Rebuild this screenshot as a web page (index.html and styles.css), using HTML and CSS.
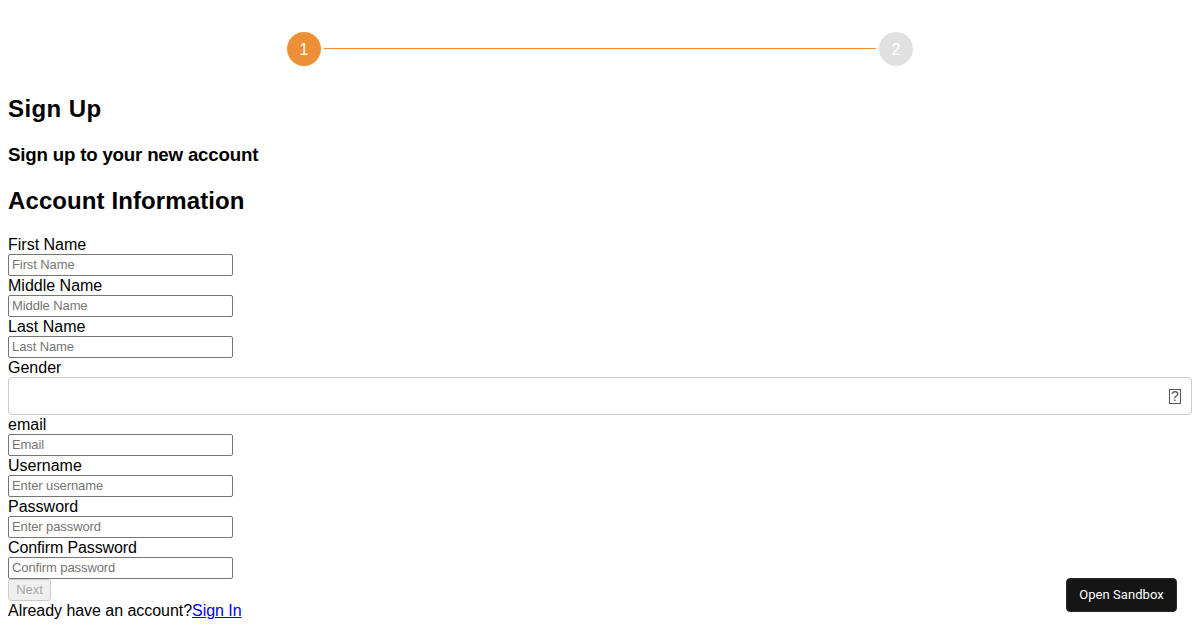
FILE: index.html
```html
<!DOCTYPE html>
<html lang="en">
  <head>
    <meta charset="UTF-8" />
    <title>Sign Up</title>
    <link rel="stylesheet" href="styles.css">
  </head>
  <body>
    <!-- Stepper -->
    <div class="stepper">
      <div class="step active">1</div>
      <div class="step-line"></div>
      <div class="step">2</div>
    </div>

    <h2 class="page-title">Sign Up</h2>
    <h3>Sign up to your new account</h3>
    <h2 class="section-title">Account Information</h2>

    <form class="signup-form">
      <div class="field">
        <label for="first">First Name</label>
        <input id="first" type="text" placeholder="First Name" />
      </div>
      <div class="field">
        <label for="middle">Middle Name</label>
        <input id="middle" type="text" placeholder="Middle Name" />
      </div>
      <div class="field">
        <label for="last">Last Name</label>
        <input id="last" type="text" placeholder="Last Name" />
      </div>
      <div class="field">
        <label>Gender</label>
        <div class="select-box"><span class="missing-icon">?</span></div>
      </div>
      <div class="field">
        <label for="email">email</label>
        <input id="email" type="text" placeholder="Email" />
      </div>
      <div class="field">
        <label for="username">Username</label>
        <input id="username" type="text" placeholder="Enter username" />
      </div>
      <div class="field">
        <label for="password">Password</label>
        <input id="password" type="password" placeholder="Enter password" />
      </div>
      <div class="field">
        <label class="tight-label" for="confirm">Confirm Password</label>
        <input id="confirm" type="password" placeholder="Confirm password" />
      </div>
      <button class="next-btn" type="button" disabled>Next</button>
    </form>

    <div class="signin-row">Already have an account?<a href="#">Sign In</a></div>

    <button class="sandbox-btn" type="button">Open Sandbox</button>
  </body>
</html>
```

FILE: styles.css
```css
body {
  margin: 8px;
  font-family: Helvetica, Arial, sans-serif;
  font-size: 16px;
  color: #000;
  background-color: #fff;
}

/* Stepper */
.stepper {
  display: flex;
  align-items: center;
  gap: 3px;
  width: 626px;
  margin: 24px auto 0;
}

.step {
  box-sizing: border-box;
  width: 34px;
  height: 34px;
  padding-top: 1px;
  flex-shrink: 0;
  display: flex;
  align-items: center;
  justify-content: center;
  border-radius: 50%;
  background-color: #e0e0e0;
  color: #fff;
}

.step.active {
  background-color: #ed8f36;
}

.step-line {
  flex: 1;
  height: 1px;
  margin-top: -1px;
  background-color: #ed8f36;
}

/* Headings */
h2 {
  font-size: 24px;
  line-height: 28px;
}

h3 {
  font-size: 18.72px;
  line-height: 22px;
  letter-spacing: -0.2px;
  margin: 21px 0 0;
}

.page-title {
  margin: 29px 0 0;
  letter-spacing: 0.4px;
}

.section-title {
  margin: 21px 0 0;
  letter-spacing: 0.1px;
}

/* Form */
.signup-form {
  margin-top: 21px;
}

.field label {
  display: block;
  height: 18px;
  line-height: 18px;
}

.field .tight-label {
  letter-spacing: -0.12px;
}

.field {
  margin-bottom: 1px;
}

.field input {
  display: block;
  box-sizing: border-box;
  width: 225px;
  height: 22px;
  padding: 0 3px 2px;
  border: 1px solid #767676;
  border-radius: 2px;
  font-size: 13px;
  letter-spacing: -0.1px;
}

.select-box {
  box-sizing: border-box;
  display: flex;
  align-items: center;
  justify-content: flex-end;
  height: 38px;
  padding-right: 10px;
  border: 1px solid #ccc;
  border-radius: 4px;
  background-color: #fff;
}

.missing-icon {
  box-sizing: border-box;
  width: 12px;
  height: 15px;
  border: 1px solid #555;
  font-size: 14px;
  line-height: 13px;
  text-align: center;
  color: #555;
}

.field:last-of-type {
  margin-bottom: 0;
}

.next-btn {
  display: block;
  box-sizing: border-box;
  width: 43px;
  height: 22px;
  padding: 0 6px 2px;
  border: 1px solid #ccc;
  border-radius: 3px;
  background-color: #efefef;
  color: #a8a8a8;
  font-size: 13px;
}

.signin-row {
  margin-top: 1px;
  line-height: 18px;
  letter-spacing: -0.04px;
}

/* Floating sandbox button */
.sandbox-btn {
  position: fixed;
  right: 23px;
  bottom: 18px;
  width: 111px;
  height: 34px;
  padding: 0 0 2px;
  border: 1px solid #2a2a2a;
  border-radius: 4px;
  background-color: #151515;
  color: #fff;
  font-family: Roboto, sans-serif;
  font-size: 13px;
  letter-spacing: 0.05px;
}
```
